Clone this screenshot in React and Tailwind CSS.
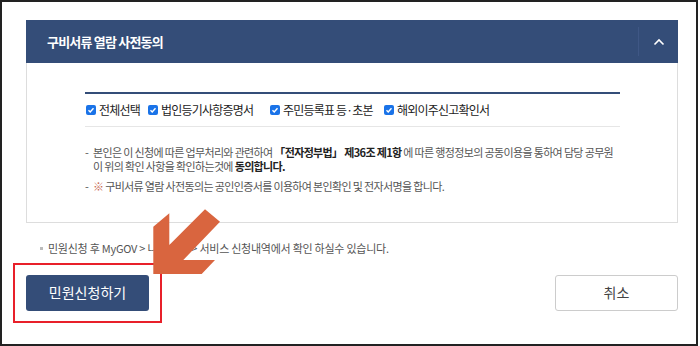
import React from "react";

const font = { fontFamily: '"Noto Sans CJK KR", "Noto Sans", sans-serif' };

function Check() {
  return (
    <span className="inline-flex items-center justify-center w-[10px] h-[10px] rounded-[2px] bg-[#1a73e8] mr-[3px]">
      <svg width="8" height="8" viewBox="0 0 8 8">
        <path d="M1.5 4.2 L3.2 5.9 L6.5 2.2" stroke="white" strokeWidth="1.4" fill="none" />
      </svg>
    </span>
  );
}

function Item({ children, className = "" }) {
  return (
    <span className={"inline-flex items-center " + className}>
      <Check />
      <span>{children}</span>
    </span>
  );
}

export default function App() {
  return (
    <div className="relative w-[698px] h-[346px] border-2 border-[#222] bg-white overflow-hidden" style={font}>
      <div className="ml-[24px] mt-[18px] w-[652px]">
        <div className="h-[43px] bg-[#344d78] flex items-center">
          <div className="flex-1 pl-[21px] text-white font-bold text-[13px] tracking-[-0.8px]">구비서류 열람 사전동의</div>
          <div className="w-[40px] h-[29px] border-l border-[#3f5785] flex items-center justify-center">
            <svg width="12" height="8" viewBox="0 0 12 8">
              <path d="M1.5 6.5 L6 2 L10.5 6.5" stroke="white" strokeWidth="1.6" fill="none" />
            </svg>
          </div>
        </div>
        <div className="h-[160px] border border-t-0 border-[#dddddd] pt-[29px] pl-[58px] pr-[57px]">
          <div className="border-t-2 border-[#344d78]" />
          <div className="h-[33px] border-b border-[#e6e6e6] flex items-center text-[12px] text-[#222] tracking-[-0.8px] pl-[1px]">
            <Item className="w-[62px]">전체선택</Item>
            <Item className="w-[122px]">법인등기사항증명서</Item>
            <Item className="w-[114px]">주민등록표 등·초본</Item>
            <Item>해외이주신고확인서</Item>
          </div>
          <div className="pt-[18px] text-[11px] text-[#555] leading-[14px] tracking-[-0.65px] whitespace-nowrap">
            <div className="flex">
              <span className="w-[8px] shrink-0">-</span>
              <span>
                본인은 이 신청에 따른 업무처리와 관련하여 <b className="text-[#222]">「전자정부법」 제36조 제1항</b> 에 따른 행정정보의 공동이용을 통하여 담당 공무원
                <br />
                이 위의 확인 사항을 확인하는것에 <b className="text-[#222]">동의합니다.</b>
              </span>
            </div>
            <div className="flex mt-[6px]">
              <span className="w-[8px] shrink-0">-</span>
              <span><span className="text-[#c96a55]">※</span> 구비서류 열람 사전동의는 공인인증서를 이용하여 본인확인 및 전자서명을 합니다.</span>
            </div>
          </div>
        </div>
        <div className="mt-[17px] pl-[14px] text-[11px] text-[#555] tracking-[-0.25px] flex items-center whitespace-nowrap">
          <span className="w-[3px] h-[3px] bg-[#bbb] mr-[5px]" />
          민원신청 후 MyGOV &gt; 나의 민원 &gt; 서비스 신청내역에서 확인 하실수 있습니다.
        </div>
        <div className="mt-[18px] flex justify-between">
          <button className="w-[123px] h-[36px] rounded-[3px] bg-[#344d78] text-white text-[14px]">민원신청하기</button>
          <button className="w-[123px] h-[36px] rounded-[3px] border border-[#cccccc] bg-white text-[#444] text-[14px]">취소</button>
        </div>
      </div>
      <div className="absolute left-[11px] top-[261px] w-[149px] h-[60px] border-2 border-[#e8202a]" />
      <svg className="absolute left-[0px] top-[0px]" width="698" height="346" viewBox="0 0 698 346" style={{ pointerEvents: "none" }}>
        <polygon
          points="151.3,272 151.3,224.7 167.3,211.3 167.3,243 203,207.3 218,219.7 181.3,258 213,258 199.7,272"
          fill="#d9653f"
        />
      </svg>
    </div>
  );
}
